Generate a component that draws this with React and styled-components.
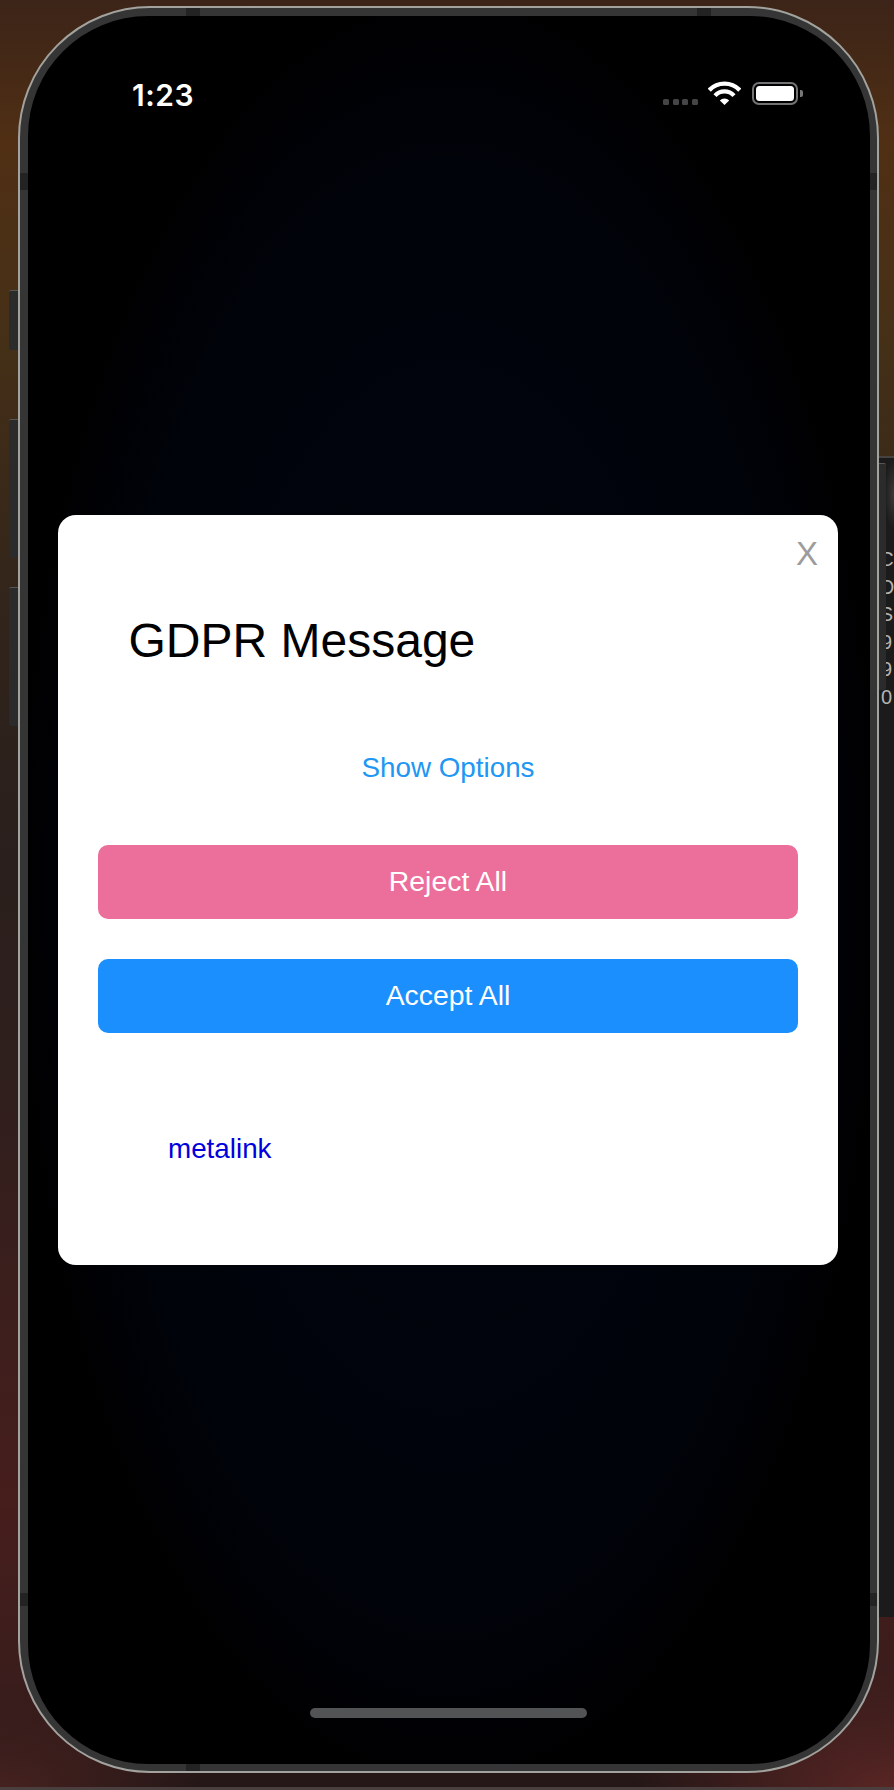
import React from "react";
import styled, { createGlobalStyle } from "styled-components";

const Global = createGlobalStyle`
  html, body { margin: 0; padding: 0; background: #2a1c1c; }
  * { box-sizing: border-box; }
`;

const Desktop = styled.div`
  position: relative;
  width: 894px;
  height: 1790px;
  overflow: hidden;
  padding: 6px 15px 0 18px;
  background:
    radial-gradient(ellipse 260px 120px at 100% 100%, #5a2624 0%, rgba(90, 38, 36, 0) 100%),
    radial-gradient(ellipse 200px 100px at 0% 100%, #46221f 0%, rgba(70, 34, 31, 0) 100%),
    linear-gradient(180deg, #3c2418 0%, #502f14 8%, #463017 18%, #2f231b 36%, #2a1f1c 48%, #2f1f1d 60%, #461e1c 84%, #3a1d1c 94%, #231616 100%);
`;

const SideWindow = styled.div`
  position: absolute;
  left: 879px;
  top: 456px;
  width: 15px;
  height: 1161px;
  border-top: 2px solid #46423f;
  background:
    radial-gradient(ellipse 10px 36px at 100% 36px, #3d3937 0%, rgba(61, 57, 55, 0) 100%),
    #1b1b1b;
`;

const SideGlyphs = styled.div`
  position: absolute;
  left: 876px;
  top: 546px;
  width: 21px;
  display: flex;
  flex-direction: column;
  align-items: center;
  font: 400 20px/27.6px "Liberation Sans", sans-serif;
  color: #b4b4b2;
`;

const SideKey = styled.div`
  position: absolute;
  top: ${(p) => p.$top}px;
  height: ${(p) => p.$height}px;
  width: 9px;
  background: #2b2b2b;
  border-top: 1.5px solid #585654;
  ${(p) => (p.$right ? "left: 879px; border-radius: 0 2px 2px 0; width: 7px;" : "left: 9px; border-radius: 2px 0 0 2px;")}
`;

const Frame = styled.div`
  position: relative;
  width: 861px;
  height: 1767px;
  padding: 8px 7px 7px 8px;
  border: 2px solid #a2a29e;
  border-radius: 132px;
  background: #343534;
`;

const Notch = styled.span`
  position: absolute;
  background: #222322;
  ${(p) => p.$css}
`;

const Screen = styled.div`
  height: 100%;
  border-radius: 120px;
  overflow: hidden;
  display: flex;
  flex-direction: column;
  background: radial-gradient(ellipse 52% 52% at 50% 50%, #01040c 0%, #00030a 78%, #000105 90%, #000 100%);
`;

const StatusBar = styled.div`
  height: 160px;
  padding: 66px 67px 0 104px;
  display: flex;
  align-items: flex-start;
  justify-content: space-between;
  flex-shrink: 0;
`;

const Clock = styled.span`
  font: 600 30px/26px Inter, "Liberation Sans", sans-serif;
  color: #fff;
  letter-spacing: 0.5px;
`;

const StatusIcons = styled.div`
  display: flex;
  align-items: flex-start;
  height: 24px;
`;

const Dots = styled.div`
  display: flex;
  gap: 3.6px;
  margin: 17px 10px 0 0;
`;

const Dot = styled.span`
  width: 6px;
  height: 6px;
  border-radius: 1.5px;
  background: #454547;
`;

const Wifi = styled.svg`
  display: block;
  margin-top: -1px;
  margin-right: 11px;
`;

const Battery = styled.div`
  width: 46px;
  height: 23px;
  padding: 2px;
  border: 2px solid #737376;
  border-radius: 7px;
`;

const BatteryFill = styled.div`
  height: 100%;
  border-radius: 3.5px;
  background: #fff;
`;

const BatteryNub = styled.span`
  width: 3px;
  height: 7px;
  margin: 8px 0 0 2px;
  border-radius: 0 2px 2px 0;
  background: #77777a;
`;

const Modal = styled.div`
  position: relative;
  margin: 339px 32px 0 30px;
  padding: 98px 40px 100px;
  height: 750px;
  border-radius: 18px;
  background: #fff;
  font-family: "Liberation Sans", Arial, sans-serif;
`;

const Close = styled.span`
  position: absolute;
  top: 21px;
  right: 20px;
  font-size: 33px;
  line-height: 36px;
  color: #9c9c9c;
`;

const Title = styled.h1`
  margin: 0 0 83px 30.5px;
  font-size: 48px;
  line-height: 56px;
  font-weight: 400;
  color: #000;
`;

const Options = styled.div`
  margin-bottom: 61px;
  text-align: center;
  font-size: 27.8px;
  line-height: 32px;
  color: #2196f3;
`;

const Action = styled.div`
  height: 74px;
  margin-bottom: ${(p) => p.$gap}px;
  padding-bottom: 2px;
  display: flex;
  align-items: center;
  justify-content: center;
  border-radius: 10px;
  background: ${(p) => p.$color};
  color: #fff;
  font-size: 28.4px;
`;

const MetaLink = styled.a`
  display: block;
  margin: 1px 0 0 70px;
  font-size: 27.8px;
  line-height: 32px;
  color: #0000dd;
`;

const HomeBar = styled.div`
  width: 277px;
  height: 10px;
  margin: auto 2px 46px 0;
  align-self: center;
  border-radius: 5px;
  background: #525354;
`;

const BottomEdge = styled.div`
  position: absolute;
  left: 0;
  right: 0;
  bottom: 0;
  height: 3px;
  background: #4a3e3e;
`;

const notches = [
  "left: 166px; top: 0; width: 14px; height: 8px;",
  "left: 677px; top: 0; width: 14px; height: 8px;",
  "left: 0; top: 165px; width: 8px; height: 17px;",
  "right: 0; top: 165px; width: 7px; height: 17px;",
  "left: 0; top: 1585px; width: 8px; height: 13px;",
  "right: 0; top: 1585px; width: 7px; height: 13px;",
  "left: 166px; bottom: 0; width: 14px; height: 7px;",
];

export default function App() {
  return (
    <Desktop>
      <Global />
      <SideWindow />
      <SideGlyphs>
        {["C", "O", "S", "9", "9", "0"].map((g, i) => (
          <span key={i}>{g}</span>
        ))}
      </SideGlyphs>
      <SideKey $top={290} $height={60} />
      <SideKey $top={419} $height={139} />
      <SideKey $top={587} $height={139} />
      <SideKey $right $top={463} $height={227} />
      <Frame>
        <Screen>
          <StatusBar>
            <Clock>1:23</Clock>
            <StatusIcons>
              <Dots>
                <Dot />
                <Dot />
                <Dot />
                <Dot />
              </Dots>
              <Wifi width="33" height="25" viewBox="0 0 33 24" fill="none">
                <path d="M1.2 8.7A21 21 0 0 1 31.8 8.7" stroke="#fff" strokeWidth="4.4" />
                <path d="M7 14.1A13 13 0 0 1 26 14.1" stroke="#fff" strokeWidth="4.2" />
                <path d="M16.5 23.5L11.8 18.9A6.6 6.6 0 0 1 21.2 18.9Z" fill="#fff" />
              </Wifi>
              <Battery>
                <BatteryFill />
              </Battery>
              <BatteryNub />
            </StatusIcons>
          </StatusBar>
          <Modal>
            <Close>X</Close>
            <Title>GDPR Message</Title>
            <Options>Show Options</Options>
            <Action $color="#ec6f9b" $gap={40}>Reject All</Action>
            <Action $color="#1b8ffd" $gap={100}>Accept All</Action>
            <MetaLink>metalink</MetaLink>
          </Modal>
          <HomeBar />
        </Screen>
        {notches.map((n, i) => (
          <Notch key={i} $css={n} />
        ))}
      </Frame>
      <BottomEdge />
    </Desktop>
  );
}
